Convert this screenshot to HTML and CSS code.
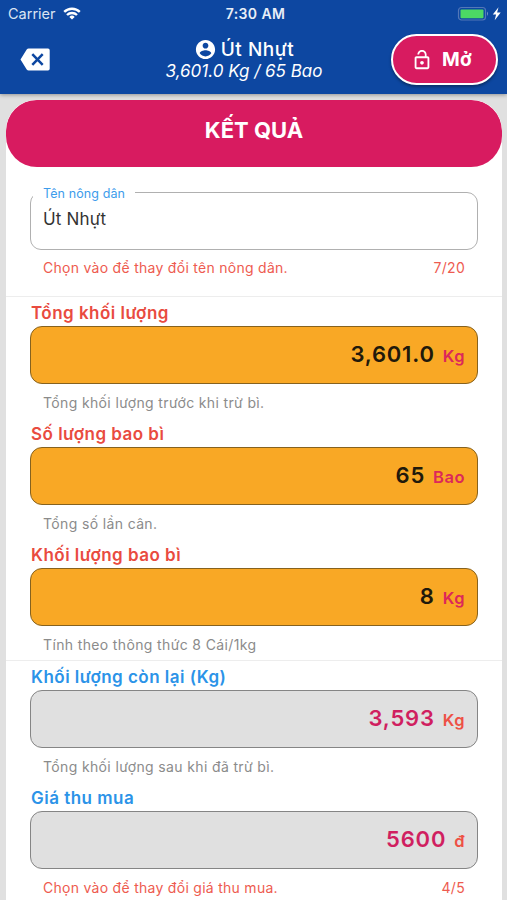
FILE: index.html
```html
<!DOCTYPE html>
<html lang="vi">
<head>
<meta charset="utf-8">
<title>Kết quả</title>
<link rel="stylesheet" href="styles.css">
</head>
<body>
<header class="appbar">
  <div class="status">
    <div class="carrier"><span>Carrier</span>
      <svg class="wifi" width="18" height="13" viewBox="0 0 18 13" fill="none" stroke="#fff" stroke-width="2.4"><path d="M1.2 4.9a11.2 11.2 0 0 1 15.6 0"/><path d="M4 8a7.2 7.2 0 0 1 10 0"/><path d="M9 12.6 6.3 9.9a3.9 3.9 0 0 1 5.4 0z" fill="#fff" stroke="none"/></svg>
    </div>
    <span class="clock">7:30 AM</span>
    <div class="power">
      <svg width="46" height="16" viewBox="0 0 46 16"><rect x="1.5" y="1.5" width="27" height="12.5" rx="3" fill="none" stroke="#5377b8" stroke-width="1.2"/><rect x="3.5" y="3.4" width="23" height="8.8" rx="1" fill="#4cd964"/><path d="M30 5.5q2 2.2 0 4.5z" fill="#7792c4"/><path d="M41.500 1.300 35.800 8.400h3.300l-1.400 5.900 6-7.700h-3.600z" fill="#fff"/></svg>
    </div>
  </div>
  <div class="toolbar">
    <svg class="back" width="30" height="23" viewBox="0 0 30 23"><path d="M8.7.5H28a1.700 1.700 0 0 1 1.700 1.700v18.600a1.700 1.700 0 0 1-1.700 1.700H8.700q-1.300 0-2-1.100L.5 11.500l6.200-9.900q.7-1.100 2-1.100z" fill="#fff"/><path d="m12.300 6.200 10.400 10.600m0-10.600L12.300 16.800" stroke="#0d47a1" stroke-width="2.500"/></svg>
    <div class="titles">
      <div class="title">
        <svg width="23" height="23" viewBox="0 0 24 24"><path fill="#fff" d="M12 2C6.480 2 2 6.480 2 12s4.480 10 10 10 10-4.480 10-10S17.520 2 12 2zm0 3c1.660 0 3 1.340 3 3s-1.340 3-3 3-3-1.340-3-3 1.340-3 3-3zm0 14.200c-2.500 0-4.710-1.280-6-3.220.03-1.990 4-3.080 6-3.080 1.990 0 5.970 1.090 6 3.080-1.290 1.940-3.500 3.220-6 3.220z"/></svg>
        <span>Út Nhựt</span>
      </div>
      <div class="subtitle">3,601.0 Kg / 65 Bao</div>
    </div>
    <div class="open">
      <svg width="22" height="22" viewBox="0 0 24 24"><path fill="#fff" d="M12 17c1.100 0 2-.9 2-2s-.9-2-2-2-2 .9-2 2 .9 2 2 2zm6-9h-1V6c0-2.760-2.240-5-5-5S7 3.240 7 6h1.900c0-1.710 1.390-3.100 3.100-3.100s3.100 1.390 3.100 3.100v2H6c-1.100 0-2 .9-2 2v10c0 1.100.9 2 2 2h12c1.100 0 2-.9 2-2V10c0-1.100-.9-2-2-2zm0 12H6V10h12v10z"/></svg>
      <span>Mở</span>
    </div>
  </div>
</header>
<main class="card">
  <h1 class="banner">KẾT QUẢ</h1>
  <section class="farmer">
    <fieldset class="field"><legend>Tên nông dân</legend><span>Út Nhựt</span></fieldset>
    <div class="helper alert"><span>Chọn vào để thay đổi tên nông dân.</span><span class="count">7/20</span></div>
  </section>
  <section class="totals">
    <div class="row"><h2>Tổng khối lượng</h2><div class="box"><b>3,601.0</b><i>Kg</i></div><div class="helper">Tổng khối lượng trước khi trừ bì.</div></div>
    <div class="row"><h2>Số lượng bao bì</h2><div class="box"><b>65</b><i>Bao</i></div><div class="helper">Tổng số lần cân.</div></div>
    <div class="row"><h2>Khối lượng bao bì</h2><div class="box"><b>8</b><i>Kg</i></div><div class="helper">Tính theo thông thức 8 Cái/1kg</div></div>
  </section>
  <section class="totals net">
    <div class="row"><h2>Khối lượng còn lại (Kg)</h2><div class="box"><b>3,593</b><i>Kg</i></div><div class="helper">Tổng khối lượng sau khi đã trừ bì.</div></div>
    <div class="row"><h2>Giá thu mua</h2><div class="box"><b>5600</b><i>đ</i></div><div class="helper alert"><span>Chọn vào để thay đổi giá thu mua.</span><span class="count">4/5</span></div></div>
  </section>
</main>
</body>
</html>
```
FILE: styles.css
```css
* { box-sizing: border-box; }
html, body { margin: 0; height: 900px; overflow: hidden; }
body { display: flex; flex-direction: column; background: #e0e0e0; font-family: Inter, sans-serif; }
svg { display: block; flex: none; }

.appbar { flex: none; height: 94px; background: #0d47a1; color: #fff; box-shadow: 0 1px 4px rgba(0,0,0,.35); }
.status { display: grid; grid-template-columns: 1fr auto 1fr; align-items: center; height: 27px; padding: 0 4px 0 8px; font-size: 14.500px; line-height: 27px; }
.carrier { display: flex; align-items: center; gap: 7px; letter-spacing: 0; color: #dbe4f2; }
.clock { font-size: 14px; font-weight: 600; letter-spacing: .4px; color: #e8eef7; }
.power { justify-self: end; }
.toolbar { display: grid; grid-template-columns: 77px 1fr 107px; height: 67px; padding: 0 9px 0 20px; }
.back { margin-top: 21px; }
.titles { display: flex; flex-direction: column; align-items: center; padding-top: 10px; }
.title { display: flex; align-items: center; gap: 4px; height: 24px; font-size: 19px; font-weight: 500; letter-spacing: .5px; }
.subtitle { height: 21px; line-height: 21px; font-size: 17px; font-style: italic; letter-spacing: 0; white-space: nowrap; }
.open { display: flex; align-items: center; gap: 9px; width: 107px; height: 51px; margin-top: 7px; padding-left: 18px; border: 2px solid #fff; border-radius: 26px; background: #d81b60; box-shadow: 0 2px 3px rgba(0,0,0,.35); font-size: 19px; font-weight: 700; letter-spacing: .3px; }

.card { flex: 1; min-height: 0; overflow: hidden; width: 496px; margin: 6px 0 0 6px; background: #fff; border-radius: 30px 30px 0 0; }
.banner { height: 67px; margin: 0; border-radius: 31px; background: #d81b60; color: #fff; text-align: center; font-size: 22px; line-height: 61px; font-weight: 700; letter-spacing: 0; }

.farmer { height: 129px; padding: 17px 24px 0; }
.field { height: 66px; margin: 0; padding: 0 11px; border: 1.500px solid #b0b0b0; border-radius: 11px; font-size: 17px; line-height: 22px; letter-spacing: .2px; color: #333; }
.field legend { margin-left: -9px; padding: 0 10px 0 10px; height: 17px; line-height: 20px; font-size: 12.500px; letter-spacing: .1px; color: #3d9ceb; }
.field span { display: block; margin: 7px 0 0 1px; }
.helper { display: flex; justify-content: space-between; height: 39px; padding: 0 13px; font-size: 14px; line-height: 37px; letter-spacing: .36px; color: #8b8b8b; white-space: nowrap; }
.alert { letter-spacing: .28px; color: #ee5b50; }
.farmer .helper { line-height: 36px; }

.totals { height: 364px; padding: 6px 24px 0; border-top: 1px solid #ededed; }
.totals:not(.net) { height: 364px; padding-top: 5px; }
.totals.net { padding-top: 5px; }
.row { height: 121px; }
.row h2 { margin: 0 0 0 1px; height: 24px; font-size: 17px; line-height: 23px; font-weight: 600; letter-spacing: .48px; color: #e94b40; }
.net h2 { color: #2b93e8; }
.box { display: flex; justify-content: flex-end; align-items: baseline; gap: 8px; height: 58px; padding-right: 12px; border: 1px solid #86621f; border-radius: 12px; background: #f9a825; line-height: 55px; }
.box b { font-size: 22px; font-weight: 600; letter-spacing: .8px; color: #21190b; }
.box i { font-size: 16.500px; font-style: normal; font-weight: 600; letter-spacing: .5px; color: #dc285a; }
.net .box { background: #e0e0e0; border-color: #858585; }
.net .box b { color: #d01f60; }
.net .box i { color: #ee5145; }
```
